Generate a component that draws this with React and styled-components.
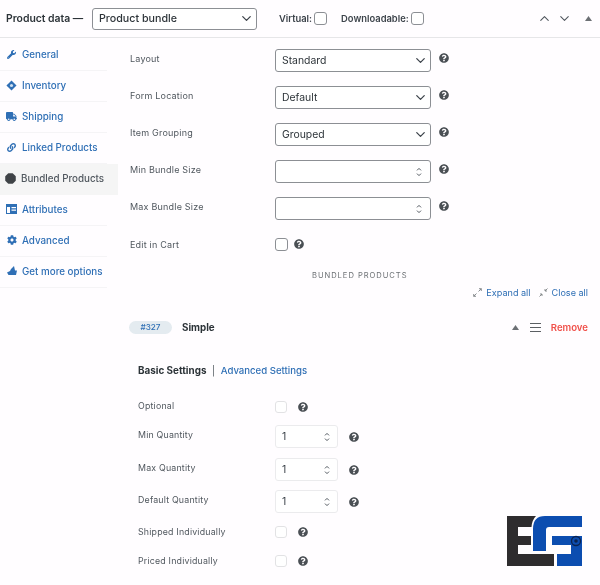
import React from 'react'
import styled, { createGlobalStyle } from 'styled-components'
import { ChevronDown, ChevronUp } from 'lucide-react'
import { FaWrench, FaTruck, FaLink, FaCog, FaQuestionCircle } from 'react-icons/fa'

const BLUE = '#2f6fb5'
const FONT = '"Inter", "Liberation Sans", sans-serif'

const Global = createGlobalStyle`
  html, body { margin: 0; padding: 0; background: #fffdff; }
  body { font-family: ${FONT}; color: #3c434a; }
`

const Page = styled.div`
  position: relative;
  width: 600px;
  height: 585px;
  overflow: hidden;
  filter: blur(0.3px);
`

const Header = styled.div`
  display: flex;
  align-items: center;
  height: 38px;
  padding: 0 8px 0 6px;
  box-sizing: border-box;
  border-bottom: 1px solid #e6e6e8;
`

const Title = styled.span`
  font-size: 10.4px;
  font-weight: 600;
  color: #2c3338;
  width: 86px;
  flex: none;
`

const TypeSelect = styled.div`
  display: flex;
  align-items: center;
  justify-content: space-between;
  box-sizing: border-box;
  width: 165px;
  height: 22px;
  padding: 0 2px 0 6px;
  border: 1px solid #8c8f94;
  border-radius: 3px;
  font-size: 10.7px;
  font-weight: 500;
  color: #2c3338;
  background: #fff;
`

const Flag = styled.label`
  display: flex;
  align-items: center;
  gap: 2px;
  margin-left: ${p => p.$left}px;
  font-size: 9.4px;
  font-weight: 600;
  color: #3c434a;
`

const Check = styled.span`
  display: block;
  flex: none;
  box-sizing: border-box;
  width: ${p => (p.$faint ? 12 : 13)}px;
  height: ${p => (p.$faint ? 12 : 13)}px;
  border: 1px solid ${p => (p.$faint ? '#e2e2e4' : '#8c8f94')};
  border-radius: 3px;
  background: #fff;
`

const Arrows = styled.div`
  display: flex;
  align-items: center;
  gap: 5px;
  margin-left: auto;
  margin-right: 13px;
  color: #50575e;
`

const Body = styled.div`
  display: flex;
`

const Side = styled.nav`
  width: 118px;
  flex: none;
  padding-top: 2px;
`

const Tab = styled.div`
  display: flex;
  align-items: center;
  gap: 5px;
  box-sizing: border-box;
  height: 31px;
  padding-left: ${p => (p.$active ? 5 : 6)}px;
  padding-bottom: 2px;
  font-size: 9.8px;
  font-weight: 500;
  color: ${p => (p.$active ? '#50575e' : BLUE)};
  background: ${p => (p.$active ? '#f5f5f5' : 'transparent')};
  border-bottom: 1px solid transparent;
  border-image: ${p => (p.$active
    ? 'none'
    : 'linear-gradient(to right, #f5f4f6 90%, transparent 90%) 1')};
`

const TabIcon = styled.span`
  display: flex;
  align-items: center;
  justify-content: center;
  width: 11px;
  flex: none;
`

const Main = styled.div`
  flex: 1;
  min-width: 0;
`

const Fields = styled.div`
  padding: 11px 0 0 12px;
`

const Field = styled.div`
  display: flex;
  align-items: flex-start;
  height: 37px;
`

const Label = styled.span`
  display: block;
  width: 145px;
  flex: none;
  padding-top: 4px;
  font-size: 9px;
  letter-spacing: 0.2px;
  color: #50575e;
`

const Control = styled.div`
  display: flex;
  align-items: center;
  justify-content: space-between;
  box-sizing: border-box;
  width: 156px;
  height: 23px;
  padding: 0 2px 0 6px;
  border: 1px solid #8c8f94;
  border-radius: 3px;
  background: #fff;
  font-size: 10.4px;
  color: #2c3338;
`

const NumberControl = styled(Control)`
  padding-right: 8px;
`

const Help = styled(FaQuestionCircle)`
  display: block;
  flex: none;
  color: #4a4f54;
  margin-left: ${p => p.$left}px;
  margin-top: ${p => p.$top || 0}px;
`

const CartRow = styled.div`
  display: flex;
  align-items: center;
  height: 14px;
  margin-top: 3px;
`

const CartLabel = styled(Label)`
  padding-top: 1px;
`

const SectionTitle = styled.div`
  margin-top: 20px;
  padding-left: 194px;
  font-size: 7.6px;
  letter-spacing: 0.95px;
  line-height: 10px;
  color: #6d7175;
`

const Tools = styled.div`
  display: flex;
  justify-content: flex-end;
  align-items: center;
  gap: 8px;
  margin-top: 4px;
  padding-right: 12px;
  height: 14px;
  font-size: 9.1px;
  color: ${BLUE};
`

const Tool = styled.span`
  display: flex;
  align-items: center;
  gap: 4px;
`

const ItemBar = styled.div`
  display: flex;
  align-items: center;
  margin-top: 21px;
  padding: 0 12px 0 11px;
  height: 14px;
`

const Pill = styled.span`
  display: flex;
  align-items: center;
  justify-content: center;
  width: 43px;
  height: 13px;
  border-radius: 7px;
  background: #e4ebf0;
  color: ${BLUE};
  font-size: 8.2px;
  font-weight: 500;
`

const ItemName = styled.span`
  margin-left: 10px;
  font-size: 9.8px;
  font-weight: 700;
  color: #2c3338;
`

const ItemTools = styled.div`
  display: flex;
  align-items: center;
  margin-left: auto;
  color: #666a6e;
`

const Remove = styled.span`
  margin-left: 10px;
  color: #f0504a;
  font-size: 9.6px;
  font-weight: 600;
`

const SubTabs = styled.div`
  display: flex;
  align-items: center;
  margin-top: 29px;
  padding-left: 20px;
  height: 14px;
  font-size: 9.6px;
`

const SubActive = styled.span`
  font-size: 9.9px;
  font-weight: 700;
  color: #2c3338;
`

const SubSep = styled.span`
  margin: 0 5.5px;
  color: #50575e;
`

const SubLink = styled.span`
  font-weight: 500;
  color: ${BLUE};
`

const Settings = styled.div`
  padding: 0 0 0 20px;
`

const SetRow = styled.div`
  display: flex;
  align-items: center;
  height: ${p => p.$h}px;
  margin-top: ${p => p.$mt || 0}px;
`

const SetLabel = styled.span`
  display: block;
  width: 137px;
  flex: none;
  margin-bottom: ${p => p.$lift || 0}px;
  font-size: 8.8px;
  letter-spacing: 0.2px;
  color: #50575e;
`

const Qty = styled.div`
  display: flex;
  align-items: center;
  justify-content: space-between;
  box-sizing: border-box;
  width: 63px;
  height: 23px;
  padding: 0 7px 0 6px;
  border: 1px solid #ebebed;
  border-radius: 3px;
  background: #fff;
  font-size: 10.4px;
  color: #3c434a;
`

const Logo = styled.svg`
  position: absolute;
  left: 507px;
  top: 515px;
`

const Spinner = () => (
  <svg width="6" height="10" viewBox="0 0 6 10" fill="none" stroke="#50575e" strokeWidth="1">
    <path d="M1 3.400 3 1.400l2 2M1 6.600l2 2 2-2" />
  </svg>
)

const Diamond = () => (
  <svg width="11" height="11" viewBox="0 0 12 12" fill={BLUE}>
    <path d="M6 .5 11.500 6 6 11.500.5 6z" />
    <circle cx="6" cy="6" r="1.700" fill="#cfe0f0" />
  </svg>
)

const Hex = () => (
  <svg width="11" height="11" viewBox="0 0 10 10" fill="#3f4347">
    <path d="M3 .2h4L9.800 3v4L7 9.800H3L.2 7V3z" />
  </svg>
)

const Table = () => (
  <svg width="11" height="10" viewBox="0 0 11 10" fill={BLUE}>
    <path d="M0 0h11v10H0zM1 3v6h3V3zm4.500 0v1.300H10V3zm0 2.400v1.300H10V5.400z" fillRule="evenodd" />
  </svg>
)

const Megaphone = () => (
  <svg width="10" height="10" viewBox="0 0 10 10" fill={BLUE}>
    <path d="M7 0 8 4.500h2L9 9H1.500L0 6.500 3 5l1-2z" />
  </svg>
)

const Grow = ({ flip }) => (
  <svg width="9" height="9" viewBox="0 0 9 9" fill="none" stroke="#7d8185" strokeWidth="0.9">
    {flip
      ? <path d="M8.500.5 6 3M6 1v2h2M.5 8.500 3 6M1 6h2v2" />
      : <path d="M5.500 3.500 8.300.7M6 .7h2.300V3M3.500 5.500.7 8.300M.7 6v2.300H3" />}
  </svg>
)

const Triangle = () => (
  <svg width="7" height="5" viewBox="0 0 7 5" fill="#6c7074">
    <path d="M3.500 0 7 5H0z" />
  </svg>
)

const Burger = () => (
  <svg width="11" height="9" viewBox="0 0 11 9" stroke="#5b5f63" strokeWidth="1" style={{ marginLeft: 11 }}>
    <path d="M0 .5h11M0 4.500h11M0 8.500h11" />
  </svg>
)

const tabs = [
  { name: 'General', icon: <FaWrench size={9} /> },
  { name: 'Inventory', icon: <Diamond /> },
  { name: 'Shipping', icon: <FaTruck size={11} /> },
  { name: 'Linked Products', icon: <FaLink size={9} /> },
  { name: 'Bundled Products', icon: <Hex />, active: true },
  { name: 'Attributes', icon: <Table /> },
  { name: 'Advanced', icon: <FaCog size={10} /> },
  { name: 'Get more options', icon: <Megaphone /> },
]

const fields = [
  { label: 'Layout', value: 'Standard' },
  { label: 'Form Location', value: 'Default' },
  { label: 'Item Grouping', value: 'Grouped' },
  { label: 'Min Bundle Size', number: true },
  { label: 'Max Bundle Size', number: true },
]

const App = () => (
  <Page>
    <Global />
    <Header>
      <Title>Product data —</Title>
      <TypeSelect>
        Product bundle
        <ChevronDown size={15} strokeWidth={2} color="#3c434a" />
      </TypeSelect>
      <Flag $left={22}>Virtual: <Check /></Flag>
      <Flag $left={14}>Downloadable: <Check /></Flag>
      <Arrows>
        <ChevronUp size={15} strokeWidth={1.7} />
        <ChevronDown size={15} strokeWidth={1.7} />
      </Arrows>
      <Triangle />
    </Header>
    <Body>
      <Side>
        {tabs.map(t => (
          <Tab key={t.name} $active={t.active}>
            <TabIcon>{t.icon}</TabIcon>
            {t.name}
          </Tab>
        ))}
      </Side>
      <Main>
        <Fields>
          {fields.map(f => (
            <Field key={f.label}>
              <Label>{f.label}</Label>
              {f.number
                ? <NumberControl><span /><Spinner /></NumberControl>
                : <Control>{f.value}<ChevronDown size={15} strokeWidth={2} color="#3c434a" /></Control>}
              <Help size={10} $left={8} $top={4} />
            </Field>
          ))}
          <CartRow>
            <CartLabel>Edit in Cart</CartLabel>
            <Check />
            <Help size={10} $left={6} />
          </CartRow>
        </Fields>
        <SectionTitle>BUNDLED PRODUCTS</SectionTitle>
        <Tools>
          <Tool><Grow />Expand all</Tool>
          <Tool><Grow flip />Close all</Tool>
        </Tools>
        <ItemBar>
          <Pill>#327</Pill>
          <ItemName>Simple</ItemName>
          <ItemTools>
            <Triangle />
            <Burger />
            <Remove>Remove</Remove>
          </ItemTools>
        </ItemBar>
        <SubTabs>
          <SubActive>Basic Settings</SubActive>
          <SubSep>|</SubSep>
          <SubLink>Advanced Settings</SubLink>
        </SubTabs>
        <Settings>
          <SetRow $h={13} $mt={23}>
            <SetLabel $lift={2}>Optional</SetLabel>
            <Check $faint />
            <Help size={10} $left={11} />
          </SetRow>
          <SetRow $h={23} $mt={12}>
            <SetLabel $lift={5}>Min Quantity</SetLabel>
            <Qty>1<Spinner /></Qty>
            <Help size={10} $left={11} />
          </SetRow>
          <SetRow $h={23} $mt={10}>
            <SetLabel $lift={5}>Max Quantity</SetLabel>
            <Qty>1<Spinner /></Qty>
            <Help size={10} $left={11} />
          </SetRow>
          <SetRow $h={23} $mt={9}>
            <SetLabel $lift={5}>Default Quantity</SetLabel>
            <Qty>1<Spinner /></Qty>
            <Help size={10} $left={11} />
          </SetRow>
          <SetRow $h={13} $mt={12}>
            <SetLabel>Shipped Individually</SetLabel>
            <Check $faint />
            <Help size={10} $left={11} />
          </SetRow>
          <SetRow $h={13} $mt={16}>
            <SetLabel>Priced Individually</SetLabel>
            <Check $faint />
            <Help size={10} $left={11} />
          </SetRow>
        </Settings>
      </Main>
    </Body>
    <Logo width="76" height="52" viewBox="0 0 76 52">
      <path d="M0 1H29Q25 5 24.500 12H11V21H24V30H11V39H47V51H0Z" fill="#2e2c2e" />
      <path d="M75 1H38Q26 1 26 14V36H39V15Q39 12 42 12H75Z" fill="#0c4db0" />
      <path d="M45 21H75V51H50V39H64V30H45Z" fill="#0c4db0" />
      <circle cx="69" cy="26" r="4.500" fill="#0c4db0" stroke="#0a2350" strokeWidth="1.300" />
      <circle cx="69" cy="26" r="1.800" fill="#0a2350" />
    </Logo>
  </Page>
)

export default App
